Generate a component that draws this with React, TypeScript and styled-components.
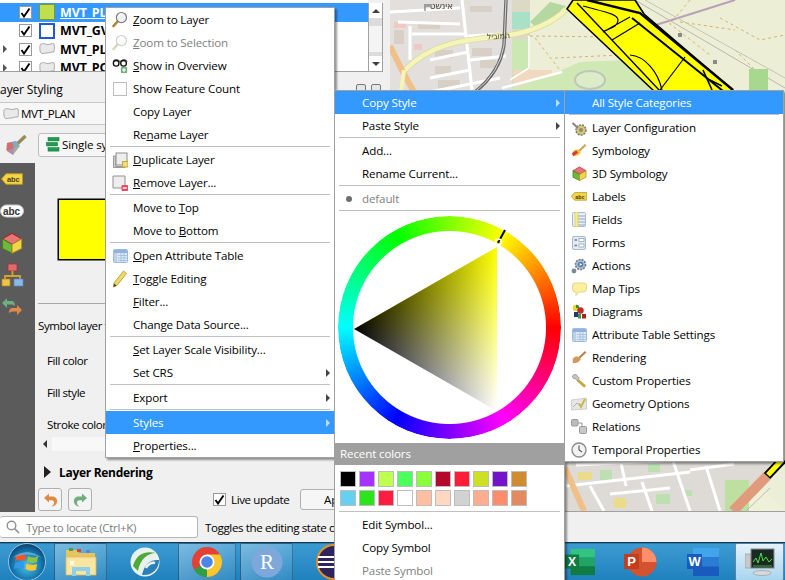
import React from 'react'
import styled, { createGlobalStyle } from 'styled-components'

const UI_FONT = `"Open Sans", "Noto Sans", "Liberation Sans", sans-serif`

const GlobalStyle = createGlobalStyle`
    html, body {
        margin: 0;
        padding: 0;
        width: 785px;
        height: 580px;
        overflow: hidden;
    }
    body {
        font-family: ${UI_FONT};
        font-size: 11.6px;
        letter-spacing: -0.14px;
        color: #000;
    }
`

const Page = styled.div`
    position: relative;
    width: 785px;
    height: 580px;
    overflow: hidden;
    display: flex;
    flex-direction: column;
    background: #f0f0f0;
`

const Workspace = styled.div`
    display: flex;
    height: 512px;
    flex-shrink: 0;
`

/* ---------- left dock ---------- */

const LeftPanel = styled.div`
    width: 390px;
    flex-shrink: 0;
    display: flex;
    flex-direction: column;
    background: #f0f0f0;
`

const TreeArea = styled.div`
    display: flex;
    height: 72px;
    padding-right: 7px;
    box-sizing: border-box;
    background: #f0f0f0;
`

const Tree = styled.div`
    flex: 1;
    background: #fff;
    padding-top: 3px;
    border-bottom: 1px solid #a0a0a0;
    overflow: hidden;
`

const LayerRow = styled.div<{ $selected?: boolean }>`
    display: flex;
    align-items: center;
    height: 18.5px;
    background: ${p => (p.$selected ? '#3399ff' : 'transparent')};
`

const Expander = styled.span<{ $on?: boolean }>`
    width: 0;
    height: 0;
    margin-left: 3px;
    margin-right: 12px;
    border-style: solid;
    border-width: 4px 0 4px 4px;
    border-color: transparent transparent transparent ${p => (p.$on ? '#555' : 'transparent')};
`

const CheckBox = styled.span`
    display: inline-flex;
    align-items: center;
    justify-content: center;
    width: 13px;
    height: 13px;
    box-sizing: border-box;
    background: #fff;
    border: 1px solid #9a9a9a;
    flex-shrink: 0;
`

const SwatchSlot = styled.span`
    display: inline-flex;
    align-items: center;
    justify-content: center;
    width: 16px;
    height: 16px;
    margin-left: 7px;
    margin-right: 5px;
    flex-shrink: 0;
`

const LayerName = styled.span<{ $selected?: boolean }>`
    font-weight: 700;
    font-size: 12.5px;
    white-space: nowrap;
    color: ${p => (p.$selected ? '#fff' : '#000')};
    text-decoration: ${p => (p.$selected ? 'underline' : 'none')};
`

const VScroll = styled.div`
    width: 15px;
    margin-top: 3px;
    box-sizing: border-box;
    background: #fff;
    border-right: 1px solid #a0a0a0;
    border-bottom: 1px solid #a0a0a0;
    border-left: 1px solid #a0a0a0;
    display: flex;
    flex-direction: column;
    justify-content: space-between;
    align-items: stretch;
`

const ScrollTrack = styled.div`
    flex: 1;
    background: #f4f4f4;
    border-top: 8px solid #dcdcdc;
    border-bottom: 4px solid #dcdcdc;
`

const ScrollArrow = styled.div<{ $dir: 'up' | 'down' }>`
    height: 15px;
    display: flex;
    align-items: center;
    justify-content: center;
    background: #fff;
    &::after {
        content: '';
        border-style: solid;
        border-width: ${p => (p.$dir === 'up' ? '0 4px 4px 4px' : '4px 4px 0 4px')};
        border-color: ${p =>
            p.$dir === 'up'
                ? 'transparent transparent #404040 transparent'
                : '#404040 transparent transparent transparent'};
    }
`

const TitleBar = styled.div`
    display: flex;
    align-items: center;
    height: 30px;
    padding-top: 4px;
    padding-right: 9px;
    box-sizing: border-box;
`

const TitleText = styled.span`
    margin-left: -6px;
    font-size: 12px;
    flex: 1;
`

const DockButton = styled.span`
    width: 10px;
    height: 10px;
    margin-left: 5px;
    border: 1px solid #777;
    border-radius: 2px;
    box-sizing: border-box;
    background: #e6e6e6;
`

const LayerCombo = styled.div`
    display: flex;
    align-items: center;
    height: 23px;
    margin-right: 4px;
    padding-left: 3px;
    gap: 2px;
    letter-spacing: -0.5px;
    background: #f7f7f7;
    border-top: 1px solid #c8c8c8;
    border-bottom: 1px solid #c8c8c8;
    box-sizing: border-box;
    border-radius: 0 3px 3px 0;
`

const StyleBar = styled.div`
    display: flex;
    align-items: center;
    height: 38px;
    padding-left: 4px;
    padding-top: 1px;
    box-sizing: border-box;
`

const StyleCombo = styled.div`
    display: flex;
    align-items: center;
    gap: 2px;
    height: 24px;
    width: 80px;
    margin-left: 11px;
    padding-left: 7px;
    overflow: hidden;
    white-space: nowrap;
    background: #f6f6f6;
    border: 1px solid #bcbcbc;
    border-radius: 3px;
    box-sizing: border-box;
    > * {
        flex-shrink: 0;
    }
`

const DockBody = styled.div`
    flex: 1;
    display: flex;
    min-height: 0;
`

const IconRail = styled.div`
    width: 35px;
    flex-shrink: 0;
    background: #5b5b5b;
    display: flex;
    flex-direction: column;
    align-items: center;
    gap: 8px;
    padding-top: 4px;
    padding-right: 11px;
    box-sizing: border-box;
`

const RailIcon = styled.div`
    height: 24px;
    display: flex;
    align-items: center;
    justify-content: center;
`

const SymbolPane = styled.div`
    flex: 1;
    display: flex;
    flex-direction: column;
    padding-left: 3px;
    min-width: 0;
`

const SymbolPreview = styled.div`
    width: 120px;
    height: 61px;
    margin-top: 36px;
    margin-left: 20px;
    background: #ffff00;
    border: 1px solid #000;
    box-shadow: 0 0 0 0.5px #000;
    box-sizing: border-box;
    flex-shrink: 0;
`

const PaneRule = styled.div`
    height: 1px;
    margin-top: 43px;
    margin-right: 20px;
    background: #a8a8a8;
    flex-shrink: 0;
`

const SymbolTypeLabel = styled.div`
    width: 67px;
    height: 22px;
    line-height: 22px;
    margin-top: 11px;
    margin-bottom: 12px;
    letter-spacing: -0.45px;
    overflow: hidden;
    white-space: nowrap;
    flex-shrink: 0;
`

const FieldRow = styled.div`
    height: 24px;
    line-height: 24px;
    margin-bottom: 8px;
    padding-left: 9px;
    letter-spacing: -0.45px;
    white-space: nowrap;
    flex-shrink: 0;
`

const HScroll = styled.div`
    display: flex;
    height: 14px;
    flex-shrink: 0;
    margin-top: -8px;
    margin-right: 20px;
    background: #f8f8f8;
`

const HScrollArrow = styled.div`
    width: 14px;
    display: flex;
    align-items: center;
    justify-content: center;
    background: #f0f0f0;
    &::after {
        content: '';
        border-style: solid;
        border-width: 4px 4px 4px 0;
        border-color: transparent #333 transparent transparent;
    }
`

const RenderingRow = styled.div`
    display: flex;
    align-items: center;
    gap: 8px;
    height: 24px;
    margin-top: 9px;
    padding-left: 6px;
    font-weight: 700;
    font-size: 12px;
    letter-spacing: -0.3px;
    flex-shrink: 0;
    &::before {
        content: '';
        border-style: solid;
        border-width: 6px 0 6px 7px;
        border-color: transparent transparent transparent #222;
    }
`

const ActionRow = styled.div`
    display: flex;
    align-items: center;
    height: 23px;
    margin-top: 4px;
    flex-shrink: 0;
`

const HistoryButton = styled.div`
    width: 24px;
    height: 23px;
    margin-right: 6px;
    display: flex;
    align-items: center;
    justify-content: center;
    box-sizing: border-box;
    background: #f4f4f4;
    border: 1px solid #b0b0b0;
    border-radius: 3px;
`

const LiveUpdate = styled.div`
    display: flex;
    align-items: center;
    gap: 5px;
    width: 75px;
    margin-left: 115px;
    letter-spacing: -0.4px;
    white-space: nowrap;
`

const ApplyButton = styled.div`
    width: 70px;
    height: 21px;
    margin-left: 12px;
    padding-left: 23px;
    line-height: 19px;
    box-sizing: border-box;
    background: #f6f6f6;
    border: 1px solid #b0b0b0;
    border-radius: 3px;
`

/* ---------- map ---------- */

const MapArea = styled.div`
    flex: 1;
    min-width: 0;
    background: #eceed5;
    border-bottom: 1px solid #a0a0a0;
    overflow: hidden;
`

const MapSvg = styled.svg`
    display: block;
    filter: blur(0.35px);
`

/* ---------- status bar and taskbar ---------- */

const StatusBar = styled.div`
    display: flex;
    align-items: center;
    height: 30px;
    flex-shrink: 0;
    background: #f0f0f0;
`

const Locator = styled.div`
    display: flex;
    align-items: center;
    gap: 6px;
    width: 198px;
    height: 22px;
    padding-left: 6px;
    box-sizing: border-box;
    background: #fff;
    border: 1px solid #b5b5b5;
    border-left: none;
    border-radius: 3px;
    color: #7d7d7d;
    letter-spacing: -0.35px;
`

const StatusMessage = styled.span`
    width: 129px;
    margin-left: 7px;
    overflow: hidden;
    white-space: nowrap;
    letter-spacing: -0.4px;
`

const Taskbar = styled.div`
    display: flex;
    flex: 1;
    background: linear-gradient(to bottom, #1e6c9e 0, #3c9ad2 4%, #2e8ec8 50%, #1e80bc 100%);
    border-top: 1px solid #12394f;
`

const TaskButton = styled.div<{ $width: number; $gap?: number; $active?: boolean; $glass?: boolean }>`
    width: ${p => p.$width}px;
    margin-right: ${p => p.$gap ?? 0}px;
    flex-shrink: 0;
    display: flex;
    align-items: center;
    justify-content: center;
    box-sizing: border-box;
    background: ${p =>
        p.$active
            ? 'linear-gradient(to bottom, #e4f2fb, #a8d5ef)'
            : p.$glass
              ? 'linear-gradient(135deg, rgba(255,255,255,.32), rgba(255,255,255,.08))'
              : 'transparent'};
    border: ${p => (p.$glass || p.$active ? '1px solid rgba(20,60,90,.55)' : 'none')};
    border-radius: 2px;
`

/* ---------- menus ---------- */

const Menu = styled.div<{ $left: number; $top: number; $width: number; $layer: number }>`
    position: absolute;
    left: ${p => p.$left}px;
    top: ${p => p.$top}px;
    width: ${p => p.$width}px;
    z-index: ${p => p.$layer};
    box-sizing: border-box;
    background: #fff;
    border: 1px solid #a0a0a0;
    box-shadow: 2px 2px 2px rgba(0, 0, 0, 0.4);
`

const MenuItem = styled.div<{ $active?: boolean; $disabled?: boolean }>`
    display: flex;
    align-items: center;
    height: 23px;
    padding-left: 6px;
    gap: 5px;
    white-space: nowrap;
    background: ${p => (p.$active ? '#3399ff' : 'transparent')};
    color: ${p => (p.$active ? '#fff' : p.$disabled ? '#7f7f7f' : '#000')};
`

const IconSlot = styled.span`
    width: 16px;
    height: 16px;
    flex-shrink: 0;
    display: inline-flex;
    align-items: center;
    justify-content: center;
`

const SubArrow = styled.span<{ $active?: boolean }>`
    margin-left: auto;
    margin-right: 4px;
    border-style: solid;
    border-width: 4px 0 4px 4px;
    border-color: transparent transparent transparent ${p => (p.$active ? '#bcdcff' : '#444')};
`

const MenuRule = styled.div`
    height: 1px;
    margin: 0 4px 1px;
    background: #c0c0c0;
`

const Bullet = styled.span`
    width: 6px;
    height: 6px;
    border-radius: 50%;
    background: #6e6e6e;
`

const Wheel = styled.div`
    position: relative;
    width: 223px;
    height: 223px;
    margin: 5px 0 4px 3px;
    &::before {
        content: '';
        position: absolute;
        inset: 0;
        border-radius: 50%;
        background: conic-gradient(from 90deg, #f00, #f0f, #00f, #0ff, #0f0, #ff0, #f00);
        mask: radial-gradient(closest-side, transparent 96px, #000 97px);
    }
`

const WheelTriangle = styled.div`
    position: absolute;
    left: 16px;
    top: 31px;
    width: 143px;
    height: 164px;
    clip-path: polygon(0 50%, 100% 0, 100% 100%);
    background: linear-gradient(to right, #000, rgba(0, 0, 0, 0)),
        conic-gradient(from 60deg at 0 50%, #ff0 0deg, #fff 60deg, #fff 360deg);
`

const WheelMarker = styled.svg`
    position: absolute;
    inset: 0;
`

const RecentHeader = styled.div`
    height: 22px;
    line-height: 22px;
    padding-left: 5px;
    background: #a0a0a0;
    color: #fff;
`

const SwatchGrid = styled.div`
    display: grid;
    grid-template-columns: repeat(10, 16px);
    grid-auto-rows: 16px;
    gap: 3px;
    padding: 6px 0 5px 5px;
`

const Swatch = styled.span<{ $color: string }>`
    box-sizing: border-box;
    background: ${p => p.$color};
    border: 1px solid #bdbdbd;
`

const PLabel = styled.text`
    font-family: 'Liberation Sans', sans-serif;
    font-weight: 700;
    fill: #fff;
`

const RLabel = styled.text`
    font-family: 'Liberation Serif', serif;
    fill: #fff;
`

const MapLabel = styled.text`
    font-family: 'DejaVu Sans', sans-serif;
    fill: #444;
`

/* ---------- icons ---------- */

const Tick = () => (
    <svg width="11" height="11" viewBox="0 0 11 11">
        <path d="M1.5 6 L4 9.5 L9.5 1.5" fill="none" stroke="#000" strokeWidth="1.9" />
    </svg>
)

const PolySwatch = () => (
    <svg width="16" height="14" viewBox="0 0 16 14">
        <path
            d="M1 3 C3 0.5 6 2 8 2.5 C11 3 13 0.5 15 2 C16 6 15 8 15 10 C12 9.5 11 11 8 11 C5 11 3 12.5 1.5 10.5 C0.5 8 1 5 1 3 Z"
            fill="#e9e9e9"
            stroke="#a9a9a9"
        />
    </svg>
)

const Lens = ({ faded }: { faded?: boolean }) => (
    <svg width="17" height="17" viewBox="0 0 17 17" opacity={faded ? 0.35 : 1}>
        <path d="M1.5 15.5 L6 10.5" stroke="#b08a2a" strokeWidth="2.6" strokeLinecap="round" />
        <circle cx="10" cy="6.5" r="5.4" fill="#eef2f4" stroke="#777" strokeWidth="1.2" />
        <path d="M7 5 A4 4 0 0 1 11 3" stroke="#fff" strokeWidth="1.4" fill="none" />
    </svg>
)

const Glasses = () => (
    <svg width="18" height="16" viewBox="0 0 18 16">
        <path d="M1 3 Q2 1 5 1 Q7.5 1 9 3 Q11 1 13.5 1 Q16.5 1 17 3" fill="none" stroke="#111" strokeWidth="1" />
        <circle cx="4.7" cy="5" r="3.2" fill="#fff" stroke="#111" strokeWidth="1.5" />
        <circle cx="13" cy="5" r="3.2" fill="#fff" stroke="#111" strokeWidth="1.5" />
        <rect x="10" y="9" width="7" height="7" rx="1" fill="#6fae7f" />
        <path d="M13.5 10.3 V14.7 M11.3 12.5 H15.7" stroke="#fff" strokeWidth="1.4" />
    </svg>
)

const Duplicate = () => (
    <svg width="16" height="16" viewBox="0 0 16 16">
        <path d="M1.5 4 H4 V14.5 H13 V15.5 H1.5 Z" fill="#cfcfcf" stroke="#888" strokeWidth="0.8" />
        <rect x="4" y="1" width="11" height="12" fill="#eeeeee" stroke="#8d8d8d" />
        <rect x="10.5" y="9.5" width="5.5" height="5.5" fill="#f1dc7c" stroke="#c2a93a" />
    </svg>
)

const Remove = () => (
    <svg width="16" height="16" viewBox="0 0 16 16">
        <path d="M1 1 H13 V13 H1 Z" fill="#eeeeee" stroke="#909090" />
        <rect x="9.5" y="10" width="6.5" height="6" rx="1" fill="#e8485a" />
        <rect x="10.8" y="12.3" width="4" height="1.5" fill="#fff" />
    </svg>
)

const TableIcon = () => (
    <svg width="15" height="14" viewBox="0 0 15 14">
        <rect x="0.5" y="0.5" width="14" height="13" rx="1" fill="#dfeaf5" stroke="#9ebbdc" />
        <rect x="1" y="1" width="13" height="3" fill="#8fb3dc" />
        <rect x="1" y="4" width="3.2" height="9" fill="#b9d0ea" />
        <path d="M5 6.5 H14 M5 9 H14 M5 11.5 H14 M8 4 V13 M11 4 V13" stroke="#9ebbdc" strokeWidth="0.8" />
    </svg>
)

const Pencil = () => (
    <svg width="16" height="18" viewBox="0 0 16 18">
        <path d="M11.5 1 L14.5 3.5 L5 15.5 L1.5 17 L2 13 Z" fill="#f0d860" stroke="#a89538" strokeWidth="0.8" />
        <path d="M1.5 17 L2 13.5 L4.5 15.5 Z" fill="#444" />
    </svg>
)

const SmallCheck = () => (
    <svg width="14" height="14" viewBox="0 0 14 14">
        <rect x="0.5" y="0.5" width="13" height="13" fill="#fff" stroke="#bdbdbd" />
    </svg>
)

const Brush = ({ mixed }: { mixed?: boolean }) => (
    <svg width="18" height="15" viewBox="0 0 18 15">
        <path d="M9 8 L16.5 1" stroke={mixed ? '#c9a35a' : '#b7824a'} strokeWidth="2.4" />
        <path d="M2 9 C4 6 7 6 9.5 7 L11 9.5 C9 13 6 14 2 14 Z" fill={mixed ? '#e6c230' : '#d09a5a'} />
        {mixed && <path d="M1 10.5 L6 7.5 L8 10 L2.5 14 Z" fill="#d83a3a" />}
    </svg>
)

const BigBrush = () => (
    <svg width="23" height="23" viewBox="0 0 23 23">
        <path d="M11 13 L21.5 3" stroke="#9a8a5a" strokeWidth="3.4" />
        <path d="M3 10 L12 8 L16 13 L9 22 L2 17 Z" fill="#9fb38e" />
        <path d="M3 10 L8 9 L10 15 L3 18 Z" fill="#d96b6b" />
        <path d="M8 9 L12 8 L15 13 L10 15 Z" fill="#7ea8cf" />
        <path d="M3 18 L10 15 L9 22 Z" fill="#b08ab8" />
    </svg>
)

const Cube = ({ size }: { size: number }) => (
    <svg width={size} height={size} viewBox="0 0 16 16">
        <path d="M8 1 L15 5 L8 9 L1 5 Z" fill="#e97474" stroke="#a02020" strokeWidth="0.7" />
        <path d="M1 5 L8 9 V15.5 L1 12 Z" fill="#6fb83a" stroke="#3c7a1d" strokeWidth="0.7" />
        <path d="M15 5 L8 9 V15.5 L15 12 Z" fill="#f3d34a" stroke="#a88f1e" strokeWidth="0.7" />
    </svg>
)

const LabelTag = ({ width }: { width: number }) => (
    <svg width={width} height={(width * 12) / 22} viewBox="0 0 22 12">
        <path d="M0.5 6 L5 0.7 H21.5 V11.3 H5 Z" fill="#f3d34a" stroke="#b8971a" />
        <text x="6" y="9" fontSize="7.5" fontFamily="Liberation Sans" fontWeight="700" fill="#4a4010">
            abc
        </text>
    </svg>
)

const CloudLabel = () => (
    <svg width="24" height="14" viewBox="0 0 24 14">
        <rect x="0.5" y="1" width="23" height="12" rx="6" fill="#fff" stroke="#c8c8c8" />
        <text x="3" y="10.5" fontSize="10" fontFamily="Liberation Sans" fontWeight="700" fill="#333">
            abc
        </text>
    </svg>
)

const TreeDiagram = () => (
    <svg width="23" height="24" viewBox="0 0 23 24">
        <rect x="7" y="1" width="9" height="7" fill="#e36a6a" stroke="#9c2f2f" strokeWidth="0.7" />
        <path d="M11.5 8 V13 M4 16 V13 H19 V16" stroke="#d8a030" strokeWidth="1.8" fill="none" />
        <rect x="1" y="16" width="8" height="7" fill="#f0c24a" stroke="#a88418" strokeWidth="0.7" />
        <rect x="13" y="16" width="9" height="7" fill="#8cb8e8" stroke="#5a88b8" strokeWidth="0.7" />
    </svg>
)

const TurnArrow = ({ color, flip }: { color: string; flip?: boolean }) => (
    <svg width="15" height="14" viewBox="0 0 15 14">
        <g transform={flip ? 'translate(15,0) scale(-1,1)' : undefined}>
            <path
                d="M1 5 L6 0.5 V3.5 H9 C13 3.5 14.5 6 14 9 C13.5 12 11 13.5 8 13.5 C10.5 12.5 11 11 11 9.5 C11 8 10 7.2 8.5 7.2 H6 V9.5 Z"
                fill={color}
            />
        </g>
    </svg>
)

const RailArrows = () => (
    <svg width="22" height="20" viewBox="0 0 22 20">
        <path d="M1 6 L6 1 V4 H10 C13 4 14 6 14 9 C12.5 7.5 11 7.5 9 7.5 H6 V11 Z" fill="#6fae7f" />
        <path d="M21 13 L16 8 V11 H12 C9 11 8 13 8 16 C10 14.5 11 14.5 13 14.5 H16 V18 Z" fill="#e08a48" />
    </svg>
)

const WrenchGear = () => (
    <svg width="16" height="16" viewBox="0 0 16 16">
        <circle cx="10" cy="10" r="5" fill="#d8c870" stroke="#777" strokeDasharray="2 1" strokeWidth="1.5" />
        <circle cx="10" cy="10" r="2" fill="#888" />
        <path d="M1.5 3 L7 8" stroke="#888" strokeWidth="2.2" />
    </svg>
)

const Fields = () => (
    <svg width="14" height="15" viewBox="0 0 14 15">
        <rect x="0.5" y="0.5" width="13" height="14" rx="1" fill="#e6eef7" stroke="#a9bcd4" />
        <path d="M6 4 H13 M6 7 H13 M6 10 H13 M6 13 H13" stroke="#8d9fb5" strokeWidth="0.9" />
        <rect x="3" y="0" width="3" height="15" fill="#f5ec88" stroke="#d9cc50" strokeWidth="0.6" />
    </svg>
)

const Forms = () => (
    <svg width="14" height="14" viewBox="0 0 14 14">
        <rect x="0.5" y="0.5" width="13" height="13" rx="1.5" fill="#e2eaf3" stroke="#a5b9d2" />
        <path d="M2.5 4 H5 M2.5 9.5 H5" stroke="#6d7d90" strokeWidth="1.4" />
        <rect x="7" y="2.5" width="5" height="3" fill="#fff" stroke="#8a9cb0" strokeWidth="0.7" />
        <rect x="7" y="8" width="5" height="3" fill="#fff" stroke="#8a9cb0" strokeWidth="0.7" />
    </svg>
)

const ActionsIcon = () => (
    <svg width="16" height="16" viewBox="0 0 16 16">
        <circle cx="9.5" cy="6.5" r="5" fill="#b8c2cc" stroke="#6e7a86" strokeDasharray="2 1" strokeWidth="1.6" />
        <circle cx="9.5" cy="6.5" r="2.8" fill="#4a7fc0" />
        <path d="M8.6 5 L11.2 6.5 L8.6 8 Z" fill="#fff" />
        <circle cx="3" cy="13" r="2.4" fill="#7d8a96" />
    </svg>
)

const Bubble = () => (
    <svg width="15" height="14" viewBox="0 0 15 14">
        <path
            d="M3 1 H12 Q14.5 1 14.5 4 V7 Q14.5 10 12 10 H7 L4 13.5 V10 H3 Q0.5 10 0.5 7 V4 Q0.5 1 3 1 Z"
            fill="#fbee9e"
            stroke="#e6d887"
        />
    </svg>
)

const DiagramsIcon = () => (
    <svg width="15" height="15" viewBox="0 0 15 15">
        <circle cx="4" cy="4" r="3.2" fill="#e3d92f" />
        <path d="M4 4 L4 0.8 A3.2 3.2 0 0 1 7.2 4 Z" fill="#2d8c3c" />
        <circle cx="8.5" cy="6.5" r="3.2" fill="#c8272b" />
        <rect x="2" y="8" width="4" height="5" fill="#1d3a78" />
        <rect x="6" y="9.5" width="3" height="5" fill="#3c9a3a" />
        <rect x="10" y="10" width="4" height="4.5" fill="#b02020" />
    </svg>
)

const WrenchIcon = () => (
    <svg width="17" height="16" viewBox="0 0 17 16">
        <path d="M7 7 L15 14" stroke="#caa83c" strokeWidth="3" />
        <path
            d="M1.5 3 C2.5 0.5 6 0.5 7 3 L9 5 L6.5 7.5 L4.5 5.5 C3 6 2 5 1.5 3 Z"
            fill="#c6c6c6"
            stroke="#7a7a7a"
            strokeWidth="0.7"
        />
    </svg>
)

const GeometryIcon = () => (
    <svg width="16" height="14" viewBox="0 0 16 14">
        <path d="M0.5 3 L15.5 1 V12 L0.5 13 Z" fill="#e6e6e6" stroke="#cfcfcf" />
        <path d="M2 10 L6 6 L9 9" stroke="#b0b0b0" fill="none" />
        <path d="M8 6.5 L10 10 L14 2" stroke="#c8b850" strokeWidth="2" fill="none" />
    </svg>
)

const RelationsIcon = () => (
    <svg width="16" height="15" viewBox="0 0 16 15">
        <rect x="0.5" y="0.5" width="6.5" height="6.5" rx="1" fill="#bdbdbd" stroke="#9a9a9a" />
        <rect x="8.5" y="7.5" width="7" height="7" rx="1" fill="#c8c8c8" stroke="#9a9a9a" />
        <path d="M7 4 H11 V7.5" stroke="#9a9a9a" fill="none" />
    </svg>
)

const ClockIcon = () => (
    <svg width="16" height="16" viewBox="0 0 16 16">
        <circle cx="8" cy="8" r="7" fill="#f2f2f2" stroke="#8c8c8c" strokeWidth="1.4" />
        <path d="M8 3.5 V8 L11 10" stroke="#555" strokeWidth="1.1" fill="none" />
    </svg>
)

const SearchGlass = () => (
    <svg width="14" height="14" viewBox="0 0 14 14">
        <circle cx="5.5" cy="5.5" r="4.3" fill="none" stroke="#909090" strokeWidth="1.4" />
        <path d="M8.5 8.5 L13 13" stroke="#909090" strokeWidth="1.7" />
    </svg>
)

const SingleSymbolIcon = () => (
    <svg width="14" height="15" viewBox="0 0 14 15">
        <rect x="2" y="0.5" width="11" height="3.4" fill="#1e9e50" stroke="#0a6b30" strokeWidth="0.5" />
        <rect x="0.5" y="5.5" width="11" height="3.4" fill="#1e9e50" stroke="#0a6b30" strokeWidth="0.5" />
        <rect x="2" y="10.7" width="11" height="3.4" fill="#1e9e50" stroke="#0a6b30" strokeWidth="0.5" />
    </svg>
)

const StartOrb = () => (
    <svg width="38" height="38" viewBox="0 0 38 38">
        <defs>
            <radialGradient id="orb" cx="50%" cy="60%" r="60%">
                <stop offset="0" stopColor="#4fc3ee" />
                <stop offset="0.7" stopColor="#0f6fa8" />
                <stop offset="1" stopColor="#0b3f68" />
            </radialGradient>
        </defs>
        <circle cx="19" cy="19" r="18.5" fill="url(#orb)" stroke="#b8d8ea" strokeWidth="0.8" />
        <path d="M8 13 Q13 10 18 13 L17 18 Q12 16 7 18 Z" fill="#f0552c" />
        <path d="M20 13 Q25 16 30 13 L29 19 Q24 21 19 18.5 Z" fill="#8cc63f" />
        <path d="M7 20 Q12 18 16.5 20 L15.5 26 Q11 24 6 26 Z" fill="#2f9bea" />
        <path d="M18.5 20.5 Q23 23 29 21 L28 27 Q22 29 17.5 26 Z" fill="#fdc82f" />
        <path d="M4 15 Q19 3 34 15 Q19 8 4 15 Z" fill="#ffffff" opacity="0.3" />
    </svg>
)

const FolderIcon = () => (
    <svg width="32" height="30" viewBox="0 0 32 30">
        <path d="M1 3 H12 L14 6 H30 V14 H1 Z" fill="#e9c45e" />
        <rect x="4" y="1" width="4" height="3" fill="#4aa04a" />
        <rect x="12" y="2" width="4" height="3" fill="#d04a3a" />
        <rect x="21" y="3" width="4" height="3" fill="#4a8ad8" />
        <path d="M1 10 H31 V28 H1 Z" fill="#f8e6a0" stroke="#d8b860" strokeWidth="0.8" />
        <path d="M7 20 H25 V29 H21 V24 H11 V29 H7 Z" fill="#8fd0ea" />
        <path d="M5 14 L9 18 M9 14 L5 18" stroke="#fff" strokeWidth="1.2" />
    </svg>
)

const GlobeApp = () => (
    <svg width="30" height="30" viewBox="0 0 30 30">
        <circle cx="15" cy="15" r="14.5" fill="#e9f1ee" />
        <path d="M3 19 C6 8 14 3 26 6 C18 6 10 12 8 24 Z" fill="#4fa83a" />
        <path d="M12 28 C14 18 20 12 29 13 C29 22 22 29 12 28 Z" fill="#2a7fb8" />
        <path d="M16 21 C18 17 22 15 25 16" stroke="#eaf4f8" strokeWidth="2.4" fill="none" />
    </svg>
)

const ChromeIcon = () => (
    <svg width="30" height="30" viewBox="0 0 30 30">
        <circle cx="15" cy="15" r="15" fill="#e34133" />
        <path d="M15 15 L2 22.5 A15 15 0 0 0 15 30 L22 21 Z" fill="#2f9e44" />
        <path d="M15 15 L15 30 A15 15 0 0 0 28 7.5 L15 7.5 Z" fill="#fbc52d" />
        <circle cx="15" cy="15" r="7.5" fill="#fff" />
        <circle cx="15" cy="15" r="5.8" fill="#4a85e8" />
    </svg>
)

const RIcon = () => (
    <svg width="32" height="32" viewBox="0 0 32 32">
        <circle cx="16" cy="16" r="15.5" fill="#7ea8dc" />
        <RLabel x="16" y="23" fontSize="21" textAnchor="middle">
            R
        </RLabel>
    </svg>
)

const EclipseIcon = () => (
    <svg width="36" height="36" viewBox="0 0 36 36">
        <circle cx="18" cy="18" r="17" fill="#2d2460" stroke="#e8902a" strokeWidth="2" />
        <path d="M2 13 H34 M2 18 H34 M2 23 H34" stroke="#fff" strokeWidth="2" />
    </svg>
)

const OfficeIcon = ({ letter }: { letter: 'X' | 'W' }) => {
    const tones =
        letter === 'X' ? ['#21a366', '#107c41', '#185c37', '#33c481'] : ['#2b7cd3', '#185abd', '#103f91', '#41a5ee']
    const badge = letter === 'X' ? '#107c41' : '#185abd'
    return (
        <svg width="32" height="30" viewBox="0 0 32 30">
            <rect x="6" y="1" width="26" height="9.3" fill={tones[3]} />
            <rect x="6" y="10" width="26" height="9.3" fill={tones[0]} />
            <rect x="6" y="19.5" width="26" height="9.5" fill={tones[1]} />
            <rect x="0" y="7" width="15" height="15" fill={badge} />
            <PLabel x="7.5" y="19" fontSize="13" textAnchor="middle">
                {letter}
            </PLabel>
        </svg>
    )
}

const PowerPointIcon = () => (
    <svg width="33" height="30" viewBox="0 0 33 30">
        <circle cx="18" cy="15" r="14.5" fill="#d35230" />
        <path d="M18 15 V0.5 A14.5 14.5 0 0 1 32.5 15 Z" fill="#ff8f6b" />
        <rect x="0" y="7" width="15" height="15" fill="#c43e1c" />
        <PLabel x="7.5" y="19" fontSize="13" textAnchor="middle">
            P
        </PLabel>
    </svg>
)

const MonitorIcon = () => (
    <svg width="30" height="28" viewBox="0 0 30 28">
        <rect x="0" y="6" width="6" height="14" fill="#c8c8c8" stroke="#888" strokeWidth="0.5" />
        <rect x="6" y="1" width="23" height="19" fill="#1a2a22" stroke="#8a8a8a" />
        <path d="M8 14 L11 10 L13 15 L16 5 L18 13 L21 9 L24 14 L27 11" stroke="#4ee04e" strokeWidth="1" fill="none" />
        <path d="M8 18 H27" stroke="#4ee04e" strokeWidth="0.7" />
        <ellipse cx="17" cy="25" rx="9" ry="2.5" fill="#d8d8d8" stroke="#888" strokeWidth="0.5" />
    </svg>
)

/* ---------- map drawing ---------- */

const MapDrawing = () => (
    <MapSvg width="395" height="511" viewBox="0 0 395 511">
        {/* urban west side */}
        <rect x="0" y="0" width="122" height="100" fill="#e2dfdc" />
        <rect x="122" y="0" width="18" height="100" fill="#dcd9c4" />
        <rect x="122" y="12" width="18" height="17" fill="#a8e0c8" />
        <path d="M140 22 L160 2 L176 6 L168 18 L145 26 Z" fill="#b4d8a0" />
        <rect x="122" y="40" width="16" height="30" fill="#cbe8b2" />
        <rect x="124" y="70" width="38" height="20" fill="#f2d8c0" />
        <path d="M118 90 L160 75 L190 62 L240 60 L262 92 Z" fill="#cfe8b4" />
        <ellipse cx="200" cy="80" rx="15" ry="9" fill="#dcecc8" stroke="#bfc4bc" strokeWidth="2" />
        <g fill="#d8cfc6">
            <rect x="80" y="6" width="22" height="6" />
            <rect x="28" y="22" width="22" height="7" />
            <rect x="82" y="48" width="20" height="8" />
            <rect x="90" y="60" width="16" height="8" />
            <rect x="45" y="50" width="18" height="8" />
            <rect x="45" y="66" width="16" height="8" />
            <rect x="48" y="80" width="22" height="8" />
            <rect x="4" y="30" width="10" height="14" />
        </g>
        <g fill="#f2c8c4">
            <rect x="4" y="22" width="12" height="6" />
            <rect x="24" y="44" width="8" height="6" />
        </g>
        <g stroke="#fff" strokeWidth="3.2" fill="none">
            <path d="M72 0 L82 90" />
            <path d="M0 12 L70 8" />
            <path d="M8 22 L70 24" />
            <path d="M22 34 L76 34" />
            <path d="M40 60 L78 52" />
            <path d="M40 78 L80 70" />
            <path d="M80 60 L116 56" />
            <path d="M78 36 L112 34" />
            <path d="M40 92 L110 78" />
            <path d="M20 26 L20 60" />
        </g>
        <path d="M15 70 C40 44 70 40 120 35 C140 32 165 22 176 9" stroke="#d9d9a0" strokeWidth="6" fill="none" />
        <path d="M15 70 C40 44 70 40 120 35 C140 32 165 22 176 9" stroke="#f5f5b8" strokeWidth="4.5" fill="none" />
        <path d="M0 46 L14 74 L24 92" stroke="#f0c088" strokeWidth="6" fill="none" />
        <path d="M14 70 L10 100" stroke="#f5f5b8" strokeWidth="4" fill="none" />
        <path d="M116 0 L114 45 Q110 72 85 92" stroke="#6a6a6a" strokeWidth="3.4" fill="none" />
        <path d="M116 0 L114 45 Q110 72 85 92" stroke="#d8d8d8" strokeWidth="1" fill="none" />
        <path d="M139 36 V68 M139 68 L120 80" stroke="#fff" strokeWidth="1.6" fill="none" />
        <path d="M112 88 L172 72" stroke="#fff" strokeWidth="2.4" fill="none" />
        <g stroke="#d8b078" strokeWidth="1" strokeDasharray="3 3" fill="none">
            <path d="M140 36 L226 37" />
            <path d="M145 38 L170 70" />
            <path d="M165 58 L230 55" />
            <path d="M300 0 L280 24 L320 55" />
            <path d="M330 18 L370 40 L395 35" />
            <path d="M345 50 L365 70" />
            <path d="M290 22 L345 30" />
        </g>

        {/* east fields */}
        <path d="M250 30 L345 0" stroke="#b9a0b8" strokeWidth="2" fill="none" />
        <path d="M245 0 L395 88" stroke="#b8b8ac" strokeWidth="1" fill="none" />
        <path d="M255 0 L395 78" stroke="#c4c4b4" strokeWidth="1" fill="none" />
        <rect x="359" y="69" width="19" height="22" fill="#a8d890" />
        <rect x="288" y="33" width="4" height="4" fill="#8a8a8a" />
        <rect x="323" y="60" width="4" height="4" fill="#8a8a8a" />

        {/* yellow plan polygon */}
        <path d="M177 9 L183 0 L245 0 L254 14 L345 92 L265 92 Z" fill="#ffff00" stroke="#000" strokeWidth="1.6" />
        <g stroke="#000" fill="none">
            <path d="M197 0 L250 13 L343 90" strokeWidth="2.4" />
            <path d="M242 18 L333 91" strokeWidth="2" />
            <path d="M187 3 L270 91" strokeWidth="1.4" />
            <path d="M193 6 C215 12 228 14 228 20 C228 28 218 28 213 32 L240 17" strokeWidth="1.2" />
            <path d="M222 40 L250 23" strokeWidth="1.2" />
            <path d="M240 55 C255 56 268 72 272 90" strokeWidth="1.2" />
            <path d="M270 90 L295 57" strokeWidth="1.2" />
            <path d="M313 70 L322 90 M320 80 L332 86" strokeWidth="1.6" />
        </g>

        {/* south suburb, seen below the menus */}
        <rect x="175" y="458" width="220" height="53" fill="#dedad6" />
        <path d="M345 511 L385 458 L395 458 L395 511 Z" fill="#ecefd8" />
        <path d="M335 511 L365 482 L395 511 Z" fill="#eef0d8" />
        <rect x="335" y="480" width="24" height="31" fill="#bde0a0" />
        <g fill="#bce0b0">
            <rect x="210" y="470" width="12" height="10" />
            <rect x="258" y="464" width="12" height="8" />
            <rect x="266" y="494" width="14" height="10" />
            <rect x="294" y="490" width="8" height="6" />
        </g>
        <rect x="188" y="472" width="14" height="8" fill="#ecdc8a" />
        <rect x="224" y="498" width="12" height="10" fill="#ecdc8a" />
        <g stroke="#fff" strokeWidth="3" fill="none">
            <path d="M176 486 L300 472" />
            <path d="M186 465 L292 460" />
            <path d="M230 458 L236 486" />
            <path d="M282 458 L300 511" />
            <path d="M200 486 L214 511" />
            <path d="M252 482 L262 511" />
            <path d="M300 470 L344 464" />
            <path d="M316 466 L330 511" />
            <path d="M220 494 L280 488" />
        </g>
        <path d="M175 468 L194 511" stroke="#f0c088" strokeWidth="6" fill="none" />
        <path d="M343 511 L377 476" stroke="#e09a7c" strokeWidth="10" fill="none" />
        <path d="M377 476 L393 459" stroke="#000" strokeWidth="9" fill="none" />
        <path d="M378 475 L392 460" stroke="#ffff00" strokeWidth="5" fill="none" />
        <path d="M380 488 L356 511" stroke="#bbb" strokeWidth="1" fill="none" />

        <MapLabel x="63" y="9" fontSize="9" direction="rtl">
            אינשטיין
        </MapLabel>
        <MapLabel x="120" y="38" fontSize="8" direction="rtl" transform="rotate(-4 120 38)">
            המוביל
        </MapLabel>
    </MapSvg>
)

/* ---------- data ---------- */

const RECENT_COLORS = [
    '#000000',
    '#a632ff',
    '#bfff50',
    '#4cff5c',
    '#88ff38',
    '#b4082c',
    '#ff1c38',
    '#cde024',
    '#7414c8',
    '#cf8c30',
    '#66d0f0',
    '#2ce41c',
    '#ff1c40',
    '#ffffff',
    '#ffbfa0',
    '#ffd8c4',
    '#d2d2d2',
    '#ffac90',
    '#ff8c6c',
    '#e48a60',
]

const STYLE_CATEGORIES: { label: string; icon: React.ReactNode }[] = [
    { label: 'Layer Configuration', icon: <WrenchGear /> },
    { label: 'Symbology', icon: <Brush mixed /> },
    { label: '3D Symbology', icon: <Cube size={15} /> },
    { label: 'Labels', icon: <LabelTag width={16} /> },
    { label: 'Fields', icon: <Fields /> },
    { label: 'Forms', icon: <Forms /> },
    { label: 'Actions', icon: <ActionsIcon /> },
    { label: 'Map Tips', icon: <Bubble /> },
    { label: 'Diagrams', icon: <DiagramsIcon /> },
    { label: 'Attribute Table Settings', icon: <TableIcon /> },
    { label: 'Rendering', icon: <Brush /> },
    { label: 'Custom Properties', icon: <WrenchIcon /> },
    { label: 'Geometry Options', icon: <GeometryIcon /> },
    { label: 'Relations', icon: <RelationsIcon /> },
    { label: 'Temporal Properties', icon: <ClockIcon /> },
]

const LAYERS = [
    { name: 'MVT_PL', selected: true, expander: false, swatch: 'fill' },
    { name: 'MVT_GV', selected: false, expander: false, swatch: 'line' },
    { name: 'MVT_PL', selected: false, expander: true, swatch: 'poly' },
    { name: 'MVT_PO', selected: false, expander: true, swatch: 'poly' },
]

const LayerSwatch = styled.span<{ $kind: string }>`
    width: 16px;
    height: 16px;
    box-sizing: border-box;
    background: ${p => (p.$kind === 'fill' ? '#bfe04c' : '#fff')};
    border: ${p => (p.$kind === 'fill' ? '1px solid #7a9a30' : '2px solid #2258d8')};
`

/* ---------- page ---------- */

const Item: React.FC<{
    icon?: React.ReactNode
    arrow?: boolean
    active?: boolean
    disabled?: boolean
    children: React.ReactNode
}> = ({ icon, arrow, active, disabled, children }) => (
    <MenuItem $active={active} $disabled={disabled}>
        <IconSlot>{icon}</IconSlot>
        <span>{children}</span>
        {arrow && <SubArrow $active={active} />}
    </MenuItem>
)

const App: React.FC = () => {
    return (
        <Page>
            <GlobalStyle />
            <Workspace>
                <LeftPanel>
                    <TreeArea>
                        <Tree>
                            {LAYERS.map((layer, i) => (
                                <LayerRow key={i} $selected={layer.selected}>
                                    <Expander $on={layer.expander} />
                                    <CheckBox>
                                        <Tick />
                                    </CheckBox>
                                    <SwatchSlot>
                                        {layer.swatch === 'poly' ? <PolySwatch /> : <LayerSwatch $kind={layer.swatch} />}
                                    </SwatchSlot>
                                    <LayerName $selected={layer.selected}>{layer.name}</LayerName>
                                </LayerRow>
                            ))}
                        </Tree>
                        <VScroll>
                            <ScrollArrow $dir="up" />
                            <ScrollTrack />
                            <ScrollArrow $dir="down" />
                        </VScroll>
                    </TreeArea>
                    <TitleBar>
                        <TitleText>Layer Styling</TitleText>
                        <DockButton />
                        <DockButton />
                    </TitleBar>
                    <LayerCombo>
                        <PolySwatch />
                        <span>MVT_PLAN</span>
                    </LayerCombo>
                    <StyleBar>
                        <BigBrush />
                        <StyleCombo>
                            <SingleSymbolIcon />
                            <span>Single symbol</span>
                        </StyleCombo>
                    </StyleBar>
                    <DockBody>
                        <IconRail>
                            <RailIcon>
                                <LabelTag width={22} />
                            </RailIcon>
                            <RailIcon>
                                <CloudLabel />
                            </RailIcon>
                            <RailIcon>
                                <Cube size={22} />
                            </RailIcon>
                            <RailIcon>
                                <TreeDiagram />
                            </RailIcon>
                            <RailIcon>
                                <RailArrows />
                            </RailIcon>
                        </IconRail>
                        <SymbolPane>
                            <SymbolPreview />
                            <PaneRule />
                            <SymbolTypeLabel>Symbol layer type</SymbolTypeLabel>
                            <FieldRow>Fill color</FieldRow>
                            <FieldRow>Fill style</FieldRow>
                            <FieldRow>Stroke color</FieldRow>
                            <HScroll>
                                <HScrollArrow />
                            </HScroll>
                            <RenderingRow>Layer Rendering</RenderingRow>
                            <ActionRow>
                                <HistoryButton>
                                    <TurnArrow color="#e08a48" />
                                </HistoryButton>
                                <HistoryButton>
                                    <TurnArrow color="#6fae7f" flip />
                                </HistoryButton>
                                <LiveUpdate>
                                    <CheckBox>
                                        <Tick />
                                    </CheckBox>
                                    <span>Live update</span>
                                </LiveUpdate>
                                <ApplyButton>Apply</ApplyButton>
                            </ActionRow>
                        </SymbolPane>
                    </DockBody>
                </LeftPanel>
                <MapArea>
                    <MapDrawing />
                </MapArea>
            </Workspace>
            <StatusBar>
                <Locator>
                    <SearchGlass />
                    <span>Type to locate (Ctrl+K)</span>
                </Locator>
                <StatusMessage>Toggles the editing state of the current layer</StatusMessage>
            </StatusBar>
            <Taskbar>
                <TaskButton $width={54}>
                    <StartOrb />
                </TaskButton>
                <TaskButton $width={53} $gap={5} $glass>
                    <FolderIcon />
                </TaskButton>
                <TaskButton $width={65} $gap={1}>
                    <GlobeApp />
                </TaskButton>
                <TaskButton $width={58} $gap={4} $glass>
                    <ChromeIcon />
                </TaskButton>
                <TaskButton $width={53} $gap={5} $glass>
                    <RIcon />
                </TaskButton>
                <TaskButton $width={72} $gap={195}>
                    <EclipseIcon />
                </TaskButton>
                <TaskButton $width={30} $gap={29}>
                    <OfficeIcon letter="X" />
                </TaskButton>
                <TaskButton $width={33} $gap={29}>
                    <PowerPointIcon />
                </TaskButton>
                <TaskButton $width={33} $gap={16}>
                    <OfficeIcon letter="W" />
                </TaskButton>
                <TaskButton $width={49} $active>
                    <MonitorIcon />
                </TaskButton>
            </Taskbar>

            <Menu $left={105} $top={7} $width={230} $layer={1}>
                <Item icon={<Lens />}>
                    <u>Z</u>oom to Layer
                </Item>
                <Item icon={<Lens faded />} disabled>
                    <u>Z</u>oom to Selection
                </Item>
                <Item icon={<Glasses />}>
                    <u>S</u>how in Overview
                </Item>
                <Item icon={<SmallCheck />}>Show Feature Count</Item>
                <Item>Copy Layer</Item>
                <Item>
                    Re<u>n</u>ame Layer
                </Item>
                <MenuRule />
                <Item icon={<Duplicate />}>
                    <u>D</u>uplicate Layer
                </Item>
                <Item icon={<Remove />}>
                    <u>R</u>emove Layer...
                </Item>
                <MenuRule />
                <Item>
                    Move to <u>T</u>op
                </Item>
                <Item>
                    Move to <u>B</u>ottom
                </Item>
                <MenuRule />
                <Item icon={<TableIcon />}>
                    <u>O</u>pen Attribute Table
                </Item>
                <Item icon={<Pencil />}>
                    <u>T</u>oggle Editing
                </Item>
                <Item>
                    <u>F</u>ilter...
                </Item>
                <Item>Change Data Source...</Item>
                <MenuRule />
                <Item>
                    <u>S</u>et Layer Scale Visibility...
                </Item>
                <Item arrow>Set CRS</Item>
                <MenuRule />
                <Item arrow>Export</Item>
                <MenuRule />
                <Item arrow active>
                    Styles
                </Item>
                <Item>
                    <u>P</u>roperties...
                </Item>
            </Menu>

            <Menu $left={334} $top={90} $width={231} $layer={2}>
                <Item arrow active>
                    Copy Style
                </Item>
                <Item arrow>Paste Style</Item>
                <MenuRule />
                <Item>Add...</Item>
                <Item>Rename Current...</Item>
                <MenuRule />
                <Item icon={<Bullet />} disabled>
                    default
                </Item>
                <MenuRule />
                <Wheel>
                    <WheelTriangle />
                    <WheelMarker width="223" height="223" viewBox="0 0 223 223">
                        <path d="M167 14 L161 25" stroke="#000" strokeWidth="2" />
                        <circle cx="160.5" cy="26" r="3" fill="none" stroke="#fff" strokeWidth="1.6" />
                        <circle cx="160.5" cy="26" r="1.2" fill="#000" />
                    </WheelMarker>
                </Wheel>
                <RecentHeader>Recent colors</RecentHeader>
                <SwatchGrid>
                    {RECENT_COLORS.map((color, i) => (
                        <Swatch key={i} $color={color} />
                    ))}
                </SwatchGrid>
                <MenuRule />
                <Item>Edit Symbol...</Item>
                <Item>Copy Symbol</Item>
                <Item disabled>Paste Symbol</Item>
            </Menu>

            <Menu $left={564} $top={90} $width={220} $layer={3}>
                <Item active>All Style Categories</Item>
                <MenuRule />
                {STYLE_CATEGORIES.map(category => (
                    <Item key={category.label} icon={category.icon}>
                        {category.label}
                    </Item>
                ))}
            </Menu>
        </Page>
    )
}

export default App
